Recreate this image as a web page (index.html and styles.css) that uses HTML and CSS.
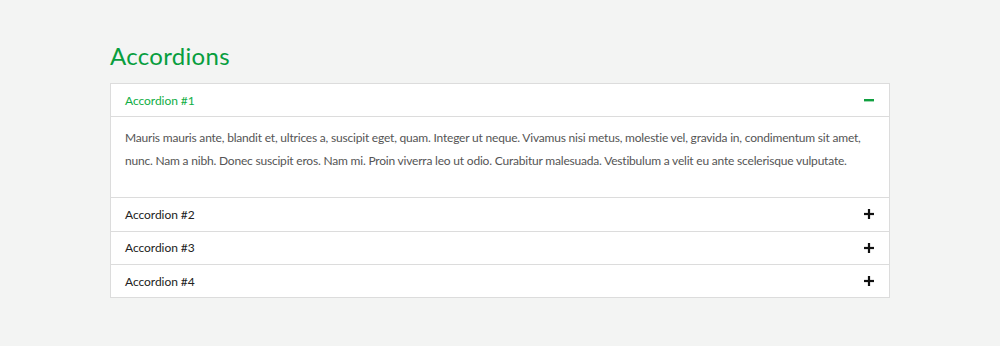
FILE: index.html
```html
<!DOCTYPE html>
<html lang="en">
<head>
	<meta charset="UTF-8">
	<title>Accordions</title>
	<link rel="stylesheet" href="styles.css">
</head>
<body>
	<div class="wrap">
		<h2 class="title">Accordions</h2>
		<div class="accordion">
			<div class="item open">
				<div class="head">
					<span>Accordion #1</span>
					<svg class="icon" width="12" height="12" viewBox="0 0 12 12"><rect x="1" y="5" width="10" height="2.4"/></svg>
				</div>
				<div class="body">
					Mauris mauris ante, blandit et, ultrices a, suscipit eget, quam. Integer ut neque. Vivamus nisi metus, molestie vel, gravida in, condimentum sit amet, nunc. Nam a nibh. Donec suscipit eros. Nam mi. Proin viverra leo ut odio. Curabitur malesuada. Vestibulum a velit eu ante scelerisque vulputate.
				</div>
			</div>
			<div class="item">
				<div class="head">
					<span>Accordion #2</span>
					<svg class="icon" width="12" height="12" viewBox="0 0 12 12"><rect x="1" y="4.9" width="10" height="2.2"/><rect x="4.9" y="1" width="2.2" height="10"/></svg>
				</div>
			</div>
			<div class="item">
				<div class="head">
					<span>Accordion #3</span>
					<svg class="icon" width="12" height="12" viewBox="0 0 12 12"><rect x="1" y="4.9" width="10" height="2.2"/><rect x="4.9" y="1" width="2.2" height="10"/></svg>
				</div>
			</div>
			<div class="item">
				<div class="head">
					<span>Accordion #4</span>
					<svg class="icon" width="12" height="12" viewBox="0 0 12 12"><rect x="1" y="4.9" width="10" height="2.2"/><rect x="4.9" y="1" width="2.2" height="10"/></svg>
				</div>
			</div>
		</div>
	</div>
</body>
</html>
```

FILE: styles.css
```css
body {
	margin: 0;
	background: #f3f4f3;
	font-family: Lato, "Noto Sans", sans-serif;
}
.wrap {
	width: 780px;
	margin: 0 auto;
	padding-top: 41px;
}
.title {
	margin: 0 0 12px;
	font-size: 24px;
	font-weight: 400;
	letter-spacing: 0.3px;
	line-height: 30px;
	color: #089e3e;
}
.accordion {
	background: #fff;
	border: 1px solid #dcdcdc;
}
.item + .item {
	border-top: 1px solid #dcdcdc;
}
.head {
	display: flex;
	align-items: center;
	justify-content: space-between;
	height: 32.3px;
	padding: 0 14px;
	font-size: 12px;
	letter-spacing: -0.05px;
	color: #222;
	cursor: pointer;
}
.icon {
	fill: #111;
}
.open .head {
	color: #10ae45;
}
.open .icon {
	fill: #10a040;
}
.body {
	border-top: 1px solid #dcdcdc;
	padding: 9px 14px 25px;
	font-size: 12px;
	letter-spacing: -0.2px;
	line-height: 23px;
	color: #555;
}
```
